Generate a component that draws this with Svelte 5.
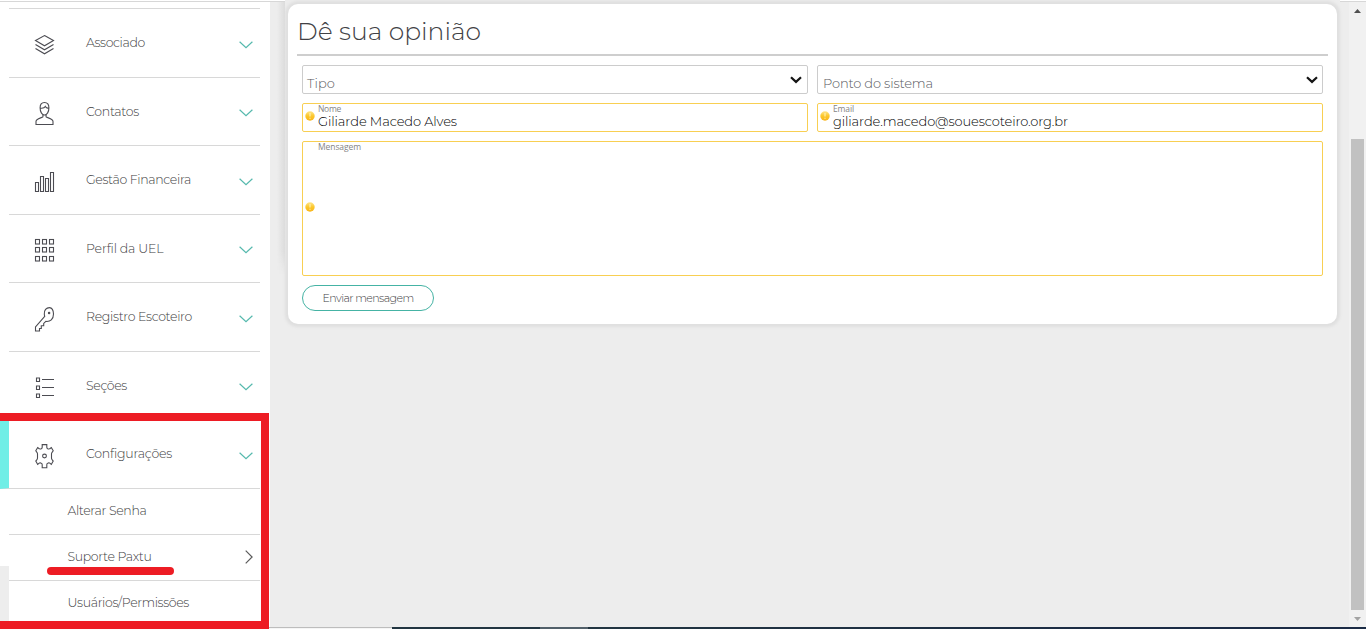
<script>
  const menu = [
    { label: 'Associado', icon: 'layers', width: 59 },
    { label: 'Contatos', icon: 'person', width: 53 },
    { label: 'Gestão Financeira', icon: 'bars', width: 105 },
    { label: 'Perfil da UEL', icon: 'grid', width: 77.5 },
    { label: 'Registro Escoteiro', icon: 'key', width: 106 },
    { label: 'Seções', icon: 'list', width: 41 },
    { label: 'Configurações', icon: 'gear', width: 86, active: true }
  ];
  const submenu = [
    { label: 'Alterar Senha', width: 79 },
    { label: 'Suporte Paxtu', width: 84, current: true },
    { label: 'Usuários/Permissões', width: 121.5 }
  ];

  function fit(node, width) {
    const natural = node.getBoundingClientRect().width;
    node.style.letterSpacing = (width - natural) / node.textContent.length + 'px';
  }
</script>

{#snippet alertDot()}
  <svg class="dot" width="10" height="10" viewBox="0 0 10 10">
    <defs>
      <linearGradient id="gold" x1="0" y1="0" x2="0" y2="1">
        <stop offset="0" stop-color="#ffe58a" />
        <stop offset=".5" stop-color="#fcc72b" />
        <stop offset="1" stop-color="#f8b51c" />
      </linearGradient>
    </defs>
    <circle cx="5" cy="5" r="4.7" fill="url(#gold)" />
    <path d="M5 2v3.6M5 6.7v1.1" stroke="#fff0b0" stroke-width="1.2" />
  </svg>
{/snippet}

{#snippet caret()}
  <svg class="caret" width="12" height="8" viewBox="0 0 12 8"><path d="M1 1.2l5 4.700 5-4.700" fill="none" stroke="#151515" stroke-width="2.200" /></svg>
{/snippet}

<div class="page">
  <aside>
    <nav>
      {#each menu as item}
        <div class="item" class:active={item.active}>
          <svg class="icon" width="24" height="26" viewBox="0.5 0 24 26" fill="none" stroke="#4c4c52" stroke-width="1.1">
            {#if item.icon === 'layers'}
              <path d="M12 3.600l9 5-9 5.200-9-5.200zM3 12.600l9 5.200 9-5.200M3 16.600l9 5.200 9-5.200" />
            {:else if item.icon === 'person'}
              <path d="M12 2.500c-3 0-4.400 2-4.400 5.200 0 4 1.800 7.300 4.400 7.300s4.400-3.300 4.400-7.300c0-3.200-1.400-5.200-4.400-5.200zM7.800 8.200c3 .4 4.300-.3 5-1.700.5 1.100 1.700 1.800 3.400 1.900M10.400 14.600v2.200c-1 1.200-6.900 1.500-6.900 4.800v2.900h17v-2.900c0-3.300-5.900-3.600-6.900-4.800v-2.200" />
            {:else if item.icon === 'bars'}
              <path d="M3 13.500h3v9H3zM8 7.500h3v15H8zM13 9.500h3v13h-3zM18 3.500h3v19h-3z" />
            {:else if item.icon === 'grid'}
              {#each [2.5, 10.5, 19.5] as y}
                {#each [3, 10, 17] as x}
                  <rect x={x} {y} width="4" height="4.500" />
                {/each}
              {/each}
            {:else if item.icon === 'key'}
              <path d="M17 1.600c-3.200 0-5.600 2.700-5.200 6.700.1.900.2 1.500.4 2L3 21v4h4v-2.500h1.800v-2.700h2.400v-2.400l2.200-2c4.300.5 7.600-2.200 7.600-7.300 0-3.900-1.600-6.500-4-6.500z" />
              <circle cx="16.600" cy="7" r=".7" />
            {:else if item.icon === 'list'}
              <path d="M4 4h3v3.500H4zM4 12h3v3.500H4zM4 20h3v3.500H4zM9.500 5.500H21.500M9.500 13.500H21.500M9.500 21.500H21.500" />
            {:else}
              <path d="M9.700 1.600h4.600v2.700q0 1 .9 1.400l.5.200q.9.400 1.600-.2l1.500-1.200 1.900 3.300-1.100 1.500q-.6.900-.6 1.700v3.900q0 .8.600 1.700l1.100 1.500-1.900 3.400-1.500-1.300q-.7-.6-1.600-.1l-.5.200q-.9.400-.9 1.400v3.100H9.700v-3.100q0-1-.9-1.400l-.5-.2q-.9-.5-1.600.1l-1.500 1.300-1.900-3.400 1.100-1.500q.6-.9.600-1.700V11q0-.8-.6-1.700L3.300 7.800l1.900-3.300 1.500 1.200q.7.600 1.600.2l.5-.2q.9-.4.900-1.400z" />
              <circle cx="12" cy="13" r="1.900" />
            {/if}
          </svg>
          <div class="name"><span use:fit={item.width}>{item.label}</span></div>
          <svg class="chev" width="14" height="8" viewBox="0 0 14 8"><path d="M.6.700L7 6.700 13.400.700" fill="none" stroke="#55b9ad" stroke-width="1.200" /></svg>
        </div>
      {/each}
      {#each submenu as item}
        <div class="sub">
          <div class="name"><span use:fit={item.width}>{item.label}</span></div>
          {#if item.current}
            <svg class="arrow" width="8" height="14" viewBox="0 0 8 14"><path d="M.7.600L7.100 7 .7 13.400" fill="none" stroke="#5a5a5a" stroke-width="1.200" /></svg>
          {/if}
        </div>
      {/each}
    </nav>
  </aside>

  <main>
    <section class="card">
      <h1><span use:fit={184}>Dê sua opinião</span></h1>
      <div class="form">
        <div class="field select"><span use:fit={28}>Tipo</span>{@render caret()}</div>
        <div class="field select second"><span use:fit={110}>Ponto do sistema</span>{@render caret()}</div>
        <div class="field warn">
          {@render alertDot()}
          <div class="stack"><label><span use:fit={23}>Nome</span></label><div class="value"><span use:fit={139}>Giliarde Macedo Alves</span></div></div>
        </div>
        <div class="field warn">
          {@render alertDot()}
          <div class="stack"><label><span use:fit={21}>Email</span></label><div class="value"><span use:fit={235}>giliarde.macedo@souescoteiro.org.br</span></div></div>
        </div>
        <div class="field warn message">
          {@render alertDot()}
          <div class="stack"><label><span use:fit={43}>Mensagem</span></label></div>
        </div>
      </div>
      <button><span use:fit={91}>Enviar mensagem</span></button>
    </section>
  </main>

  <div class="scrollbar">
    <svg width="7" height="4" viewBox="0 0 7 4"><path d="M0 4L3.500 0 7 4z" fill="#505050" /></svg>
    <div class="track"><div class="thumb"></div></div>
    <svg width="7" height="4" viewBox="0 0 7 4"><path d="M0 0L3.500 4 7 0z" fill="#a3a3a3" /></svg>
  </div>

  <div class="side-shade"></div>
  <div class="left-edge"></div>
  <div class="top-edge"></div>
  <div class="top-edge right"></div>
  <div class="status"></div>
  <div class="taskbar"></div>
  <div class="marker-box"></div>
  <div class="marker-line"></div>
</div>

<style>
  :global(body) { margin: 0; overflow: hidden; }
  .page {
    position: relative; display: flex; width: 1366px; height: 629px; overflow: hidden;
    background: #ededed; color: #3e3e42;
    font-family: Montserrat, Inter, "Open Sans", sans-serif; font-weight: 300; font-size: 12.5px;
  }
  .page * { box-sizing: border-box; }
  span { display: inline-block; white-space: nowrap; }
  aside { width: 270px; flex: none; background: #fff; padding: 8px 10px 0 9px; }
  nav { border-top: 1px solid #d8d8d8; }
  .item { display: flex; align-items: center; height: 69px; border-bottom: 1px solid #d8d8d8; padding: 0 7px 0 24px; }
  .item:nth-child(2n) { height: 68px; }
  .item .icon { margin-top: 3px; }
  .item .name { margin: -1px auto 0 29px; }
  .item .chev { margin-top: 3px; }
  .active { margin-left: -9px; border-left: 9px solid #70eee6; }
  .sub { display: flex; align-items: center; justify-content: space-between; height: 46px; border-bottom: 1px solid #d8d8d8; padding: 0 7px 0 58.5px; }
  .sub .name { margin-top: -2px; }
  .sub .arrow { margin-top: -1px; }
  main { flex: 1; padding: 4px 12px 0 18px; }
  .card { height: 320px; background: #fff; border-radius: 10px; padding: 8px 9px 0; box-shadow: 0 0 3px 3px #dfdfdf; }
  h1 { height: 44px; margin: 0; border-bottom: 2px solid #cecece; font-size: 25px; line-height: 39px; font-weight: 300; color: #414145; }
  .form { display: grid; grid-template-columns: 506px 506px; grid-template-rows: 29px 29px 135px; gap: 9px; padding: 9px 5px 0; }
  .field { display: flex; align-items: center; border: 1px solid #ccc; border-radius: 2px; }
  .select { justify-content: space-between; padding: 0 5px 0 4px; color: #59595e; font-size: 13px; }
  .select.second { padding: 0 4px 0 5px; }
  .select > span { padding-top: 7px; }
  .warn { border-color: #f8cf52; padding-left: 2px; }
  .warn .dot { margin-top: -3px; }
  .stack { align-self: stretch; margin-left: 3px; }
  .value { padding-top: 1px; font-size: 13px; line-height: 15px; color: #000; }
  label { display: block; height: 9px; line-height: 10px; font-family: "Open Sans", sans-serif; font-size: 8.500px; font-weight: 400; color: #858585; }
  .message { grid-column: 1 / 3; }
  button { display: flex; align-items: center; justify-content: center; width: 132px; height: 26px; margin: 9px 0 0 5px; padding: 0; border: 1px solid #45b3a4; border-radius: 13px; background: #fff; color: #3e3e42; font: inherit; font-size: 11px; }
  .scrollbar { flex: none; width: 17px; padding: 9px 2px 8px; display: flex; flex-direction: column; align-items: center; background: #f1f1f1; }
  .scrollbar svg { flex: none; }
  .track { flex: 1; width: 100%; padding: 126px 0 7px; }
  .thumb { height: 100%; background: #c1c1c1; }
  .side-shade { position: absolute; left: 277px; top: 2px; width: 8px; height: 272px; background: linear-gradient(90deg, #ededed, #dcdcdc); -webkit-mask-image: linear-gradient(#000 250px, transparent); mask-image: linear-gradient(#000 250px, transparent); }
  .left-edge { position: absolute; left: 0; top: 566px; width: 9px; height: 55px; background: #ededed; }
  .top-edge { position: absolute; left: 0; top: 0; width: 285px; height: 2px; background: #fff; border-bottom: 1px solid #d7d7d7; }
  .top-edge.right { left: 1340px; width: 26px; }
  .status { position: absolute; left: 269px; bottom: 0; width: 123px; height: 2px; background: #f5f5f5; border-top: 1px solid #bdbdbd; }
  .taskbar { position: absolute; left: 392px; right: 0; bottom: 0; height: 2px; background: linear-gradient(90deg, #223541 148px, #52606a 148px, #52606a 196px, #223541 196px, #1b2b45 800px); }
  .marker-box { position: absolute; left: -8px; top: 413px; width: 277px; height: 216px; border: 8px solid #ed1c24; }
  .marker-line { position: absolute; left: 47px; top: 567px; width: 127px; height: 8px; border-radius: 4px; background: #ed1c24; }
</style>
